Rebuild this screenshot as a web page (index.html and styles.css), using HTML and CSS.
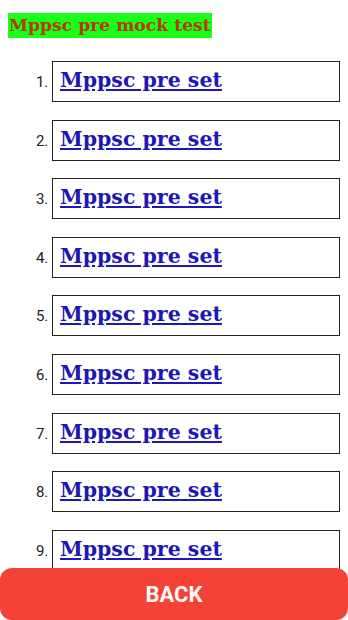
FILE: index.html
```html
<!DOCTYPE html>
<html lang="en">
<head>
    <title>Mppsc pre mock test</title>
    <meta name="viewport" content="width=device-width, initial-scale=1.0">
    <link rel="stylesheet" href="styles.css">
</head>
<body>
    <div class="head">
        <span class="title">Mppsc pre mock test</span>
    </div>
    <ol class="sets">
        <li><div class="set"><a href="#">Mppsc pre set</a></div></li>
        <li><div class="set"><a href="#">Mppsc pre set</a></div></li>
        <li><div class="set"><a href="#">Mppsc pre set</a></div></li>
        <li><div class="set"><a href="#">Mppsc pre set</a></div></li>
        <li><div class="set"><a href="#">Mppsc pre set</a></div></li>
        <li><div class="set"><a href="#">Mppsc pre set</a></div></li>
        <li><div class="set"><a href="#">Mppsc pre set</a></div></li>
        <li><div class="set"><a href="#">Mppsc pre set</a></div></li>
        <li><div class="set"><a href="#">Mppsc pre set</a></div></li>
    </ol>
    <button class="back">BACK</button>
</body>
</html>
```

FILE: styles.css
```css
body {
    margin: 8px;
    font-family: Roboto, "Liberation Sans", sans-serif;
}
.head {
    margin-top: 5px;
    height: 25px;
}
.title {
    display: inline-block;
    background-color: #1aff1a;
    color: #b33c00;
    font-family: "DejaVu Serif", serif;
    font-weight: bold;
    font-size: 17.2px;
    line-height: 25px;
    padding: 0 1px;
}
.sets {
    margin: 23px 0 0 0;
    padding-left: 44px;
    font-size: 15px;
}
.sets li {
    margin-bottom: 17.6px;
}
.sets li::marker {
    color: #222;
}
.set {
    width: 279px;
    height: 36px;
    border: 1px solid #222;
    padding: 0 0 3px 7px;
    box-sizing: content-box;
    display: flex;
    align-items: center;
}
.set a {
    color: #1f17b5;
    font-family: "DejaVu Serif", serif;
    font-weight: bold;
    font-size: 20.5px;
}
.back {
    position: fixed;
    left: 0;
    right: 0;
    bottom: 0;
    height: 52px;
    width: 100%;
    border: none;
    border-radius: 12px;
    background-color: #f44336;
    color: #fff8f6;
    font-family: Roboto, sans-serif;
    font-weight: bold;
    font-size: 22px;
}
```
